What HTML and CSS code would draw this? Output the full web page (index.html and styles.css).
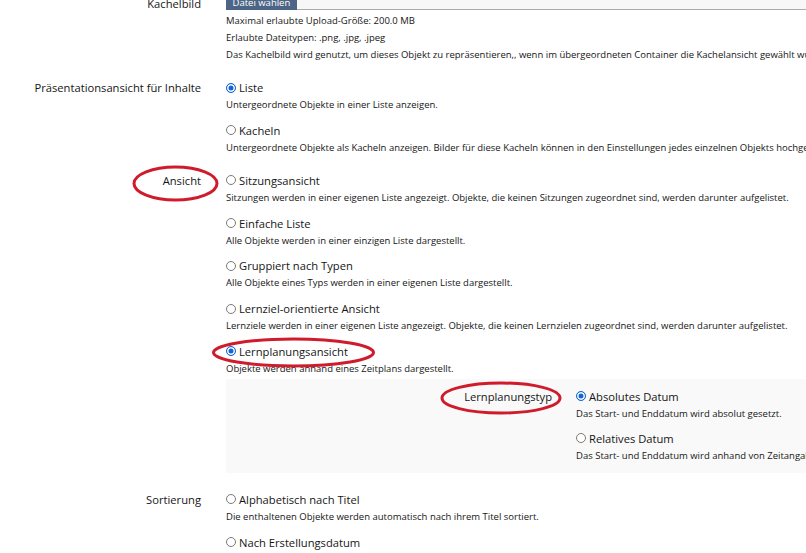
FILE: index.html
```html
<!doctype html>
<html>

<head>
    <meta charset="utf-8">
    <title>Kachelbild und Präsentationsansicht</title>
    <link rel="stylesheet" href="styles.css">
</head>

<body>
<form class="form">
    <!-- Kachelbild -->
    <div class="row">
        <div class="label">Kachelbild</div>
        <div class="field">
            <div class="file"><span class="file-btn">Datei wählen</span><span class="file-input"></span></div>
            <div class="help first">Maximal erlaubte Upload-Größe: 200.0 MB</div>
            <div class="help">Erlaubte Dateitypen: .png, .jpg, .jpeg</div>
            <div class="help">Das Kachelbild wird genutzt, um dieses Objekt zu repräsentieren,, wenn im übergeordneten Container die Kachelansicht gewählt wurde.</div>
        </div>
    </div>

    <!-- Präsentationsansicht -->
    <div class="row">
        <div class="label">Präsentationsansicht für Inhalte</div>
        <div class="field">
            <div class="opt">
                <div class="radio-line"><span class="radio on"></span>Liste</div>
                <div class="help">Untergeordnete Objekte in einer Liste anzeigen.</div>
            </div>
            <div class="opt">
                <div class="radio-line"><span class="radio"></span>Kacheln</div>
                <div class="help">Untergeordnete Objekte als Kacheln anzeigen. Bilder für diese Kacheln können in den Einstellungen jedes einzelnen Objekts hochgeladen werden.</div>
            </div>
        </div>
    </div>

    <!-- Ansicht -->
    <div class="row">
        <div class="label">Ansicht</div>
        <div class="field">
            <div class="opt">
                <div class="radio-line"><span class="radio"></span>Sitzungsansicht</div>
                <div class="help">Sitzungen werden in einer eigenen Liste angezeigt. Objekte, die keinen Sitzungen zugeordnet sind, werden darunter aufgelistet.</div>
            </div>
            <div class="opt">
                <div class="radio-line"><span class="radio"></span>Einfache Liste</div>
                <div class="help">Alle Objekte werden in einer einzigen Liste dargestellt.</div>
            </div>
            <div class="opt">
                <div class="radio-line"><span class="radio"></span>Gruppiert nach Typen</div>
                <div class="help">Alle Objekte eines Typs werden in einer eigenen Liste dargestellt.</div>
            </div>
            <div class="opt">
                <div class="radio-line"><span class="radio"></span>Lernziel-orientierte Ansicht</div>
                <div class="help">Lernziele werden in einer eigenen Liste angezeigt. Objekte, die keinen Lernzielen zugeordnet sind, werden darunter aufgelistet.</div>
            </div>
            <div class="opt">
                <div class="radio-line"><span class="radio on"></span>Lernplanungsansicht</div>
                <div class="help">Objekte werden anhand eines Zeitplans dargestellt.</div>
                <div class="sub">
                    <div class="sub-label">Lernplanungstyp</div>
                    <div class="field">
                        <div class="opt">
                            <div class="radio-line"><span class="radio on"></span>Absolutes Datum</div>
                            <div class="help">Das Start- und Enddatum wird absolut gesetzt.</div>
                        </div>
                        <div class="opt">
                            <div class="radio-line"><span class="radio"></span>Relatives Datum</div>
                            <div class="help">Das Start- und Enddatum wird anhand von Zeitangaben relativ zum Kursbeginn gesetzt.</div>
                        </div>
                    </div>
                </div>
            </div>
        </div>
    </div>

    <!-- Sortierung -->
    <div class="row row-sort">
        <div class="label">Sortierung</div>
        <div class="field">
            <div class="opt">
                <div class="radio-line"><span class="radio"></span>Alphabetisch nach Titel</div>
                <div class="help">Die enthaltenen Objekte werden automatisch nach ihrem Titel sortiert.</div>
            </div>
            <div class="opt">
                <div class="radio-line"><span class="radio"></span>Nach Erstellungsdatum</div>
                <div class="help">Die enthaltenen Objekte werden nach ihrem Erstellungsdatum sortiert.</div>
            </div>
        </div>
    </div>
</form>

<!-- rote Markierungen -->
<svg class="marks" width="806" height="553" viewBox="0 0 806 553">
    <ellipse cx="175.5" cy="183.5" rx="41.5" ry="16.5"/>
    <ellipse cx="293.5" cy="352.5" rx="80" ry="13.5"/>
    <ellipse cx="501" cy="398" rx="59" ry="15"/>
</svg>
</body>

</html>
```

FILE: styles.css
```css
* {
    padding: 0;
    margin: 0;
    box-sizing: border-box;
}

html,
body {
    overflow: hidden;
    background: #fff;
}

body {
    font-family: "Open Sans", "Liberation Sans", sans-serif;
    color: #161616;
    font-size: 11px;
}

.form {
    margin-top: -5px;
}

.row {
    display: grid;
    grid-template-columns: 201px 1fr;
    column-gap: 25px;
    margin-top: 16px;
}

.row:first-child {
    margin-top: 0;
}

.row.row-sort {
    margin-top: 18px;
}

.label {
    text-align: right;
    line-height: 17px;
    font-size: 11.2px;
    white-space: nowrap;
}

.field {
    min-width: 0;
}

.file {
    display: flex;
    height: 15px;
}

.file-btn {
    background: #4c6586;
    color: #fff;
    padding: 0 6.5px;
    line-height: 15px;
    font-size: 9.5px;
}

.file-input {
    flex: 1;
    background: #f7f7f7;
    border-bottom: 1px solid #ababab;
}

.help {
    font-size: 9.5px;
    line-height: 17px;
    white-space: nowrap;
}

.help.first {
    margin-top: 2px;
}

.opt {
    margin-top: 8.75px;
}

.opt:first-child {
    margin-top: 0;
}

.radio-line {
    display: flex;
    align-items: center;
    height: 17px;
    font-size: 11.2px;
    white-space: nowrap;
}

.radio {
    width: 10px;
    height: 10px;
    border-radius: 50%;
    border: 1px solid #7a7a7a;
    background: #fff;
    margin-right: 3px;
    flex: none;
}

.radio.on {
    border-color: #1467d2;
    background: #1467d2;
    box-shadow: inset 0 0 0 1.5px #fff;
}

.sub {
    display: grid;
    grid-template-columns: 326px 1fr;
    column-gap: 24px;
    margin-top: 2px;
    padding: 9px 0;
    background: #f9f9f9;
}

.sub-label {
    text-align: right;
    line-height: 17px;
    font-size: 11.2px;
}

.sub .opt {
    margin-top: 8px;
}

.sub .opt:first-child {
    margin-top: 0;
}

.marks {
    position: absolute;
    top: 0;
    left: 0;
    pointer-events: none;
}

.marks ellipse {
    fill: none;
    stroke: #cf1b2b;
    stroke-width: 3;
}
```
